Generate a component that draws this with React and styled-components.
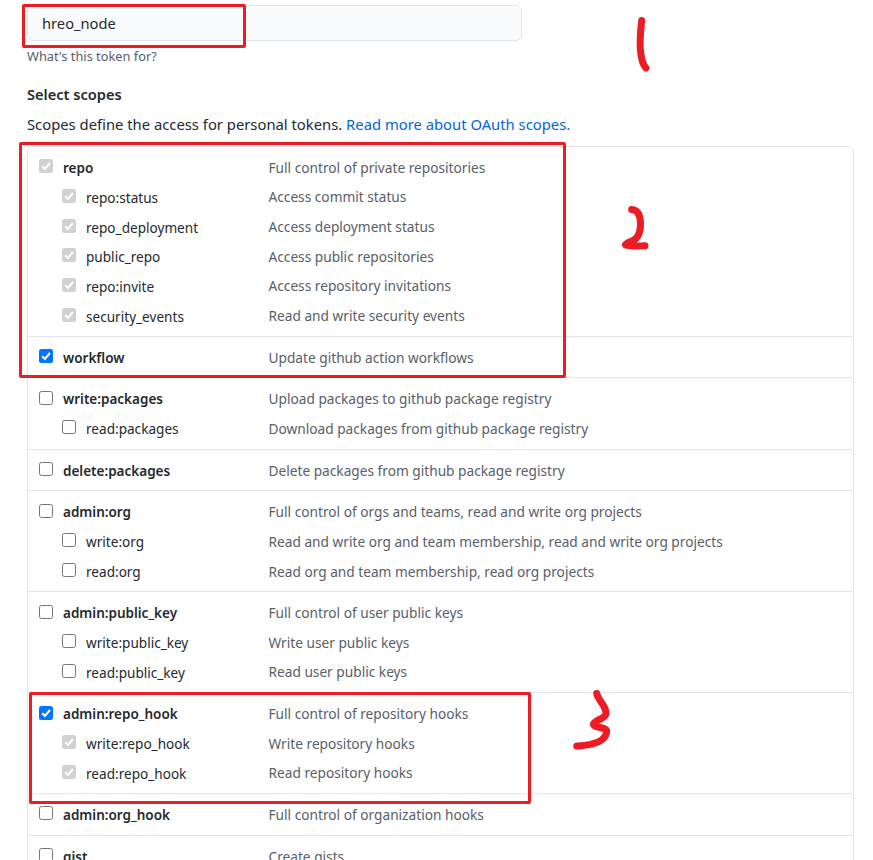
import React from "react";
import styled, { createGlobalStyle } from "styled-components";

const Global = createGlobalStyle`
  html, body { margin: 0; padding: 0; background: #fff; height: 860px; overflow: hidden; }
  * { box-sizing: border-box; }
`;

const Page = styled.div`
  position: relative;
  width: 873px;
  height: 860px;
  overflow: hidden;
  padding: 5px 19px 0 27px;
  font-family: "Noto Sans", "Open Sans", sans-serif;
  font-size: 13.7px;
  color: #24292e;
`;

const TokenInput = styled.div`
  width: 495px;
  height: 36px;
  display: flex;
  align-items: center;
  padding-left: 14px;
  background: #fafbfc;
  border: 1px solid #e1e4e8;
  border-radius: 6px;
  font-size: 14.7px;
`;

const Hint = styled.div`
  margin-top: 6px;
  font-size: 12.8px;
  line-height: 18px;
  color: #586069;
`;

const Heading = styled.div`
  margin-top: 19px;
  font-size: 14.6px;
  line-height: 20px;
  font-weight: 600;
`;

const Intro = styled.div`
  margin-top: 10px;
  line-height: 20px;
  font-size: 14.8px;
`;

const Link = styled.a`
  color: #0366d6;
  text-decoration: none;
`;

const Card = styled.div`
  margin-top: 12px;
  border: 1px solid #e1e4e8;
  border-radius: 6px;
`;

const Group = styled.div`
  padding: 6px 0 5px;
  border-top: 1px solid #e1e4e8;
  &:first-child { border-top: 0; }
`;

const Row = styled.div`
  display: grid;
  grid-template-columns: 240.5px 1fr;
  height: 29.65px;
  align-items: center;
`;

const NameCell = styled.div`
  display: flex;
  align-items: center;
  gap: 10px;
  padding-left: ${(p) => (p.$sub ? 34 : 11)}px;
  font-weight: ${(p) => (p.$sub ? 400 : 600)};
  font-size: ${(p) => (p.$sub ? 13.6 : 13.5)}px;
`;

const Description = styled.div`
  color: #586069;
  margin-top: -1px;
`;

const Box = styled.span`
  flex: none;
  width: 14px;
  height: 14px;
  border-radius: 2.5px;
  display: flex;
  align-items: center;
  justify-content: center;
  position: relative;
  top: -1.5px;
  background: ${(p) => (p.$state === "on" ? "#0075ff" : p.$state === "locked" ? "#d1d1d1" : "#fff")};
  border: ${(p) => (p.$state === "off" ? "1px solid #767676" : "0")};
`;

const Markup = styled.div`
  position: absolute;
  left: ${(p) => p.$l}px;
  top: ${(p) => p.$t}px;
  width: ${(p) => p.$w}px;
  height: ${(p) => p.$h}px;
  border: 3px solid #ed1c24;
  border-radius: 2px;
  pointer-events: none;
`;

const Scribbles = styled.svg`
  position: absolute;
  left: 0;
  top: 0;
  pointer-events: none;
`;

const Check = () => (
  <svg width="12" height="12" viewBox="0 0 12 12" fill="none">
    <path d="M2.2 6.2 L4.9 9 L9.9 3" stroke="#fff" strokeWidth="2.1" />
  </svg>
);

const Checkbox = ({ state }) => (
  <Box $state={state}>{state !== "off" && <Check />}</Box>
);

const groups = [
  [
    ["repo", "Full control of private repositories", "locked"],
    ["repo:status", "Access commit status", "locked", 1],
    ["repo_deployment", "Access deployment status", "locked", 1],
    ["public_repo", "Access public repositories", "locked", 1],
    ["repo:invite", "Access repository invitations", "locked", 1],
    ["security_events", "Read and write security events", "locked", 1],
  ],
  [["workflow", "Update github action workflows", "on"]],
  [
    ["write:packages", "Upload packages to github package registry", "off"],
    ["read:packages", "Download packages from github package registry", "off", 1],
  ],
  [["delete:packages", "Delete packages from github package registry", "off"]],
  [
    ["admin:org", "Full control of orgs and teams, read and write org projects", "off"],
    ["write:org", "Read and write org and team membership, read and write org projects", "off", 1],
    ["read:org", "Read org and team membership, read org projects", "off", 1],
  ],
  [
    ["admin:public_key", "Full control of user public keys", "off"],
    ["write:public_key", "Write user public keys", "off", 1],
    ["read:public_key", "Read user public keys", "off", 1],
  ],
  [
    ["admin:repo_hook", "Full control of repository hooks", "on"],
    ["write:repo_hook", "Write repository hooks", "locked", 1],
    ["read:repo_hook", "Read repository hooks", "locked", 1],
  ],
  [["admin:org_hook", "Full control of organization hooks", "off"]],
  [["gist", "Create gists", "off"]],
];

export default function App() {
  return (
    <Page>
      <Global />
      <TokenInput>hreo_node</TokenInput>
      <Hint>What's this token for?</Hint>
      <Heading>Select scopes</Heading>
      <Intro>
        Scopes define the access for personal tokens. <Link href="#">Read more about OAuth scopes.</Link>
      </Intro>
      <Card>
        {groups.map((rows, i) => (
          <Group key={i}>
            {rows.map(([name, desc, state, sub]) => (
              <Row key={name}>
                <NameCell $sub={!!sub}>
                  <Checkbox state={state} />
                  {name}
                </NameCell>
                <Description>{desc}</Description>
              </Row>
            ))}
          </Group>
        ))}
      </Card>
      <Markup $l={22} $t={4} $w={224} $h={44} />
      <Markup $l={19} $t={142} $w={547} $h={236} />
      <Markup $l={29} $t={692} $w={502} $h={112} />
      <Scribbles width="873" height="860" fill="none" stroke="#ed1c24" strokeWidth="7" strokeLinecap="round" strokeLinejoin="round">
        <path d="M641.7 20.5 C640 35 639.5 47 641 55 C642 61 644 66 646 68" />
        <path d="M631.7 209.5 C638 210 640.5 216 640.5 224 C640.5 234 637 239 632 241 C628 242.5 625 244 625.5 245 C630 246.5 640 246 645 245.7" />
        <path d="M596.7 693.5 C598 700 606 706 606 713 C606 719 594 720 593.5 724 C593 728 606.5 727 606.7 731 C606.5 739 600 742 592 744 C587 745.5 581 745.5 576.7 746" />
      </Scribbles>
    </Page>
  );
}
